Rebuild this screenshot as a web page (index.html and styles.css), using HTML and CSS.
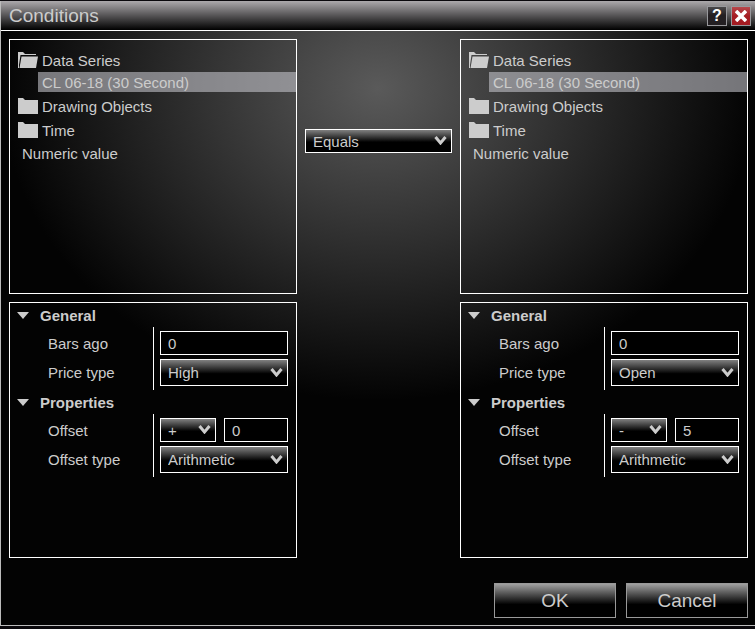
FILE: index.html
```
<!DOCTYPE html>
<html lang="en">
<head>
    <meta charset="UTF-8">
    <meta name="viewport" content="width=device-width, initial-scale=1.0">
    <title>Conditions</title>
    <link rel="stylesheet" href="styles.css">
</head>
<body>
    <!-- Shared icons -->
    <svg class="icon-defs" aria-hidden="true">
        <symbol id="folder" viewBox="0 0 20 16">
            <path d="M0 0h5l2 2h13v14H0z"/>
        </symbol>
        <symbol id="folder-open" viewBox="0 0 20 16">
            <path d="M0 0h5l2 2h11v1H2.5L1 13v3H0z"/>
            <path d="M3.5 4.5H20L18 16H1.5z"/>
        </symbol>
        <symbol id="chevron" viewBox="0 0 13 9">
            <path d="M1.5 1l5 6 5-6" fill="none" stroke="currentColor" stroke-width="3"/>
        </symbol>
        <symbol id="cross" viewBox="0 0 12 12">
            <path d="M1 1l10 10M11 1L1 11" fill="none" stroke="currentColor" stroke-width="3.6"/>
        </symbol>
    </svg>

    <form class="window">
        <header class="title-bar">
            <h1>Conditions</h1>
            <button type="button" class="title-btn" aria-label="Help">?</button>
            <button type="button" class="title-btn close-btn" aria-label="Close">
                <svg width="12" height="12"><use href="#cross"/></svg>
            </button>
        </header>

        <main class="content">
            <div class="side">
                <ul class="panel tree">
                    <li class="tree-row"><svg class="folder"><use href="#folder-open"/></svg>Data Series</li>
                    <li class="tree-row selected">CL 06-18 (30 Second)</li>
                    <li class="tree-row"><svg class="folder"><use href="#folder"/></svg>Drawing Objects</li>
                    <li class="tree-row"><svg class="folder"><use href="#folder"/></svg>Time</li>
                    <li class="tree-row leaf">Numeric value</li>
                </ul>
                <div class="panel props">
                    <details open>
                        <summary>General</summary>
                        <div class="group">
                            <label for="leftBars">Bars ago</label>
                            <div class="field"><input type="text" id="leftBars" value="0"></div>
                            <label for="leftPrice">Price type</label>
                            <div class="field">
                                <div class="select tall">
                                    <select id="leftPrice"><option>High</option><option>Open</option></select>
                                    <svg class="chevron"><use href="#chevron"/></svg>
                                </div>
                            </div>
                        </div>
                    </details>
                    <details open>
                        <summary>Properties</summary>
                        <div class="group">
                            <label for="leftOffset">Offset</label>
                            <div class="field">
                                <div class="select sign">
                                    <select aria-label="Offset sign"><option>+</option><option>-</option></select>
                                    <svg class="chevron"><use href="#chevron"/></svg>
                                </div>
                                <input type="text" id="leftOffset" value="0">
                            </div>
                            <label for="leftType">Offset type</label>
                            <div class="field">
                                <div class="select tall">
                                    <select id="leftType"><option>Arithmetic</option></select>
                                    <svg class="chevron"><use href="#chevron"/></svg>
                                </div>
                            </div>
                        </div>
                    </details>
                </div>
            </div>

            <div class="operator">
                <div class="select">
                    <select aria-label="Comparison"><option>Equals</option></select>
                    <svg class="chevron"><use href="#chevron"/></svg>
                </div>
            </div>

            <div class="side">
                <ul class="panel tree">
                    <li class="tree-row"><svg class="folder"><use href="#folder-open"/></svg>Data Series</li>
                    <li class="tree-row selected">CL 06-18 (30 Second)</li>
                    <li class="tree-row"><svg class="folder"><use href="#folder"/></svg>Drawing Objects</li>
                    <li class="tree-row"><svg class="folder"><use href="#folder"/></svg>Time</li>
                    <li class="tree-row leaf">Numeric value</li>
                </ul>
                <div class="panel props">
                    <details open>
                        <summary>General</summary>
                        <div class="group">
                            <label for="rightBars">Bars ago</label>
                            <div class="field"><input type="text" id="rightBars" value="0"></div>
                            <label for="rightPrice">Price type</label>
                            <div class="field">
                                <div class="select tall">
                                    <select id="rightPrice"><option>Open</option><option>High</option></select>
                                    <svg class="chevron"><use href="#chevron"/></svg>
                                </div>
                            </div>
                        </div>
                    </details>
                    <details open>
                        <summary>Properties</summary>
                        <div class="group">
                            <label for="rightOffset">Offset</label>
                            <div class="field">
                                <div class="select sign">
                                    <select aria-label="Offset sign"><option>-</option><option>+</option></select>
                                    <svg class="chevron"><use href="#chevron"/></svg>
                                </div>
                                <input type="text" id="rightOffset" value="5">
                            </div>
                            <label for="rightType">Offset type</label>
                            <div class="field">
                                <div class="select tall">
                                    <select id="rightType"><option>Arithmetic</option></select>
                                    <svg class="chevron"><use href="#chevron"/></svg>
                                </div>
                            </div>
                        </div>
                    </details>
                </div>
            </div>
        </main>

        <footer class="actions">
            <button type="button" class="btn">OK</button>
            <button type="button" class="btn">Cancel</button>
        </footer>
    </form>
</body>
</html>
```
FILE: styles.css
```
* {
    box-sizing: border-box;
}
body {
    margin: 0;
    padding: 1px 0 3px;
    min-height: 100vh;
    display: flex;
    background: #0a080c;
    color: #ccc;
    font-family: "Liberation Sans", Arial, sans-serif;
    font-size: 15px;
}
.icon-defs {
    display: none;
}
.window {
    flex: 1;
    min-width: 0;
    display: flex;
    flex-direction: column;
    border-left: 1px solid #bbb;
    border-bottom: 1px solid #bbb;
    background: radial-gradient(ellipse 50% 50% at 50% 14%, #5a5a5a, #030303) #030303;
}
.title-bar {
    display: flex;
    align-items: center;
    gap: 4px;
    height: 30px;
    padding: 0 4px 0 8px;
    border-bottom: 1px solid #fff;
    background: linear-gradient(#aca9ac, #000);
}
h1 {
    flex: 1;
    margin: 0;
    font-size: 19px;
    font-weight: normal;
}
.title-btn {
    display: flex;
    align-items: center;
    justify-content: center;
    width: 20px;
    height: 20px;
    padding: 0;
    border: 1px solid #98989c;
    background: linear-gradient(#4a484a, #231f22 45%);
    color: #fff;
    font: bold 16px "Liberation Sans", Arial, sans-serif;
}
.close-btn {
    background: linear-gradient(#b8484c, #a51c22 50%);
}
.content {
    flex: 1;
    display: grid;
    grid-template-columns: minmax(0, 1fr) 147px minmax(0, 1fr);
    gap: 8px;
    padding: 8px 7px 0 8px;
}
.side {
    display: grid;
    grid-template-rows: 255fr 256fr;
    gap: 8px;
}
.panel {
    margin: 0;
    border: 1px solid #fff;
}
.tree {
    padding: 8px 0 8px 8px;
    list-style: none;
}
.tree-row {
    display: flex;
    align-items: center;
    gap: 4px;
    height: 24px;
}
.tree-row.selected {
    height: 20px;
    margin: 0 0 2px 20px;
    padding-left: 4px;
    background: rgba(193, 194, 200, 0.6);
}
.tree-row.leaf {
    height: 22px;
    padding-left: 4px;
}
.folder {
    width: 20px;
    height: 16px;
    fill: #ccc;
}
.props {
    padding-right: 8px;
}
summary {
    display: flex;
    align-items: center;
    gap: 11px;
    height: 24px;
    padding-left: 7px;
    font-weight: bold;
    list-style: none;
}
summary::before {
    content: "";
    border: 6px solid transparent;
    border-top: 7px solid #ccc;
    border-bottom: 0;
}
.group {
    display: grid;
    grid-template-columns: 105px 1fr;
    margin-left: 38px;
}
.group label {
    display: flex;
    align-items: center;
}
.group label:first-child {
    padding-top: 4px;
}
.field {
    display: flex;
    gap: 8px;
    min-width: 0;
    padding: 4px 0 0 6px;
    border-left: 1px solid #fff;
}
.field:last-child {
    padding-bottom: 4px;
}
input {
    flex: 1;
    min-width: 0;
    height: 24px;
    padding: 0 7px;
    border: 1px solid #fff;
    background: #000;
    color: #ccc;
    font: inherit;
}
.select {
    position: relative;
    flex: 1;
    height: 24px;
}
.select.tall {
    height: 27px;
}
.select.sign {
    flex: none;
    width: 56px;
}
select {
    display: block;
    width: 100%;
    height: 100%;
    padding: 0 20px 0 7px;
    border: 1px solid #fff;
    border-radius: 0;
    appearance: none;
    background: linear-gradient(#808080, #000 55%);
    color: #ccc;
    font: inherit;
}
/* Arrow drawn over the select */
.chevron {
    position: absolute;
    top: 50%;
    right: 5px;
    width: 13px;
    height: 9px;
    margin-top: -5px;
    color: #ccc;
    pointer-events: none;
}
.operator {
    padding-top: 90px;
}
.actions {
    display: flex;
    justify-content: flex-end;
    gap: 10px;
    padding: 25px 7px 7px;
}
.btn {
    width: 122px;
    height: 35px;
    border: 1px solid #999;
    background: linear-gradient(#a0a0a0, #000 62%);
    color: #ccc;
    font: 19px "Liberation Sans", Arial, sans-serif;
}
```
